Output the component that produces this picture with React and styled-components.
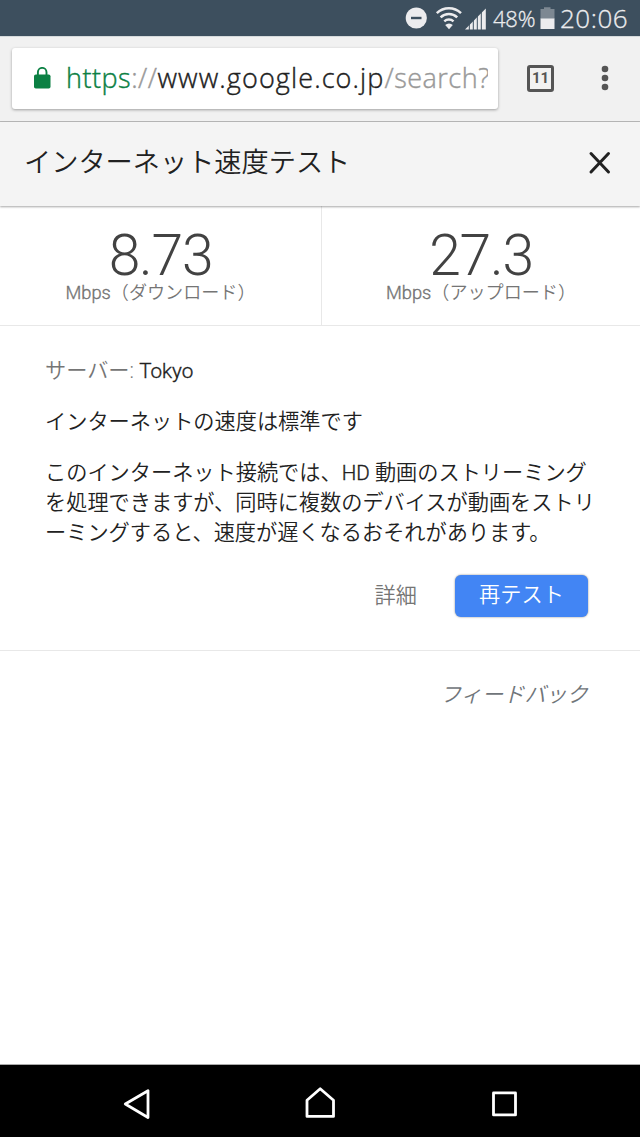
import React from 'react';
import styled, { createGlobalStyle } from 'styled-components';

const GlobalStyle = createGlobalStyle`
  * {
    box-sizing: border-box;
  }
  body {
    margin: 0;
    background: #fff;
    font-family: Roboto, 'Noto Sans CJK JP', sans-serif;
  }
`;

const Screen = styled.div`
  display: flex;
  flex-direction: column;
  width: 640px;
  height: 1137px;
  overflow: hidden;
  background: #fff;
`;

const StatusBar = styled.div`
  display: flex;
  align-items: center;
  height: 36px;
  padding-left: 405px;
  background: #3d4f5e;
  color: #ececee;
  font-family: 'Open Sans', 'Noto Sans', sans-serif;
  font-weight: 300;
  -webkit-text-stroke: 0.3px;
`;

const StatusText = styled.span`
  width: ${props => props.width}px;
  margin-left: ${props => props.left}px;
  font-size: ${props => props.size}px;
  letter-spacing: ${props => props.spacing}px;
  line-height: 36px;
  white-space: nowrap;
`;

const Toolbar = styled.div`
  display: flex;
  align-items: center;
  height: 86px;
  padding: 0 12px 2px;
  background: #f1f1f1;
  border-top: 1px solid #d5dadc;
  border-bottom: 1px solid #b9b9b9;
`;

const UrlBox = styled.div`
  display: flex;
  align-items: center;
  width: 486px;
  height: 61px;
  padding: 0 10px 0 21px;
  background: #fff;
  border-radius: 3px;
  box-shadow: 0 1px 3px rgba(0, 0, 0, 0.35);
`;

const Url = styled.div`
  flex: 1;
  margin-left: 15px;
  overflow: hidden;
  white-space: nowrap;
  font-family: 'Open Sans', 'Noto Sans', sans-serif;
  font-size: 27px;
  font-weight: 300;
  line-height: 40px;
  -webkit-text-stroke: 0.4px;
`;

const UrlPart = styled.span`
  color: ${props => props.color};
  letter-spacing: ${props => props.spacing || 0}px;
`;

const TabCount = styled.div`
  display: flex;
  align-items: center;
  justify-content: center;
  width: 27px;
  height: 27px;
  margin-left: 29px;
  border: 3px solid #555;
  border-radius: 3px;
  color: #555;
  font-size: 15px;
  font-weight: 700;
`;

const MenuIcon = styled.svg`
  margin-left: 47px;
`;

const PageHeader = styled.header`
  display: flex;
  align-items: center;
  justify-content: space-between;
  height: 84px;
  padding: 0 28px 3px 24px;
  background: #f4f4f4;
  box-shadow: 0 1px 2px rgba(0, 0, 0, 0.35);
  z-index: 1;
`;

const Title = styled.h1`
  margin: 0;
  padding-bottom: 5px;
  color: #212121;
  font-size: 27.2px;
  font-weight: 350;
`;

const Stats = styled.section`
  display: grid;
  grid-template-columns: 321px 319px;
  height: 120px;
  border-bottom: 1px solid #e8e8e8;
`;

const Stat = styled.div`
  display: flex;
  flex-direction: column;
  align-items: center;
  padding-top: 25px;
  & + & {
    border-left: 1px solid #e8e8e8;
  }
`;

const StatValue = styled.div`
  color: #424242;
  font-size: 57px;
  font-weight: 300;
  line-height: 50px;
  letter-spacing: -1.2px;
`;

const StatLabel = styled.div`
  color: #757575;
  font-size: 18.1px;
  font-weight: 350;
  line-height: 24px;
  white-space: nowrap;
`;

const Result = styled.section`
  height: 325px;
  padding: 30px 40px 0 45px;
  border-bottom: 1px solid #e8e8e8;
  color: #212121;
  font-size: 21.2px;
  font-weight: 350;
  line-height: 30px;
`;

const Paragraph = styled.p`
  margin: 0 0 21px;
  white-space: nowrap;
`;

const Muted = styled.span`
  color: #757575;
`;

// the light cut is too thin for latin words next to the kana
const Latin = styled.span`
  font-size: ${props => props.size || 20.6}px;
  font-weight: 300;
  -webkit-text-stroke: 0.35px;
`;

const Actions = styled.div`
  display: flex;
  justify-content: flex-end;
  align-items: center;
  gap: 38px;
  margin-top: 27px;
  padding-right: 12px;
`;

const DetailsLink = styled.a`
  color: #757575;
  padding-bottom: 1px;
`;

const RetryButton = styled.button`
  width: 133px;
  height: 42px;
  padding: 0 0 2px;
  border: 0;
  border-radius: 6px;
  background: #4285f4;
  box-shadow: 0 0 2px rgba(0, 0, 0, 0.5);
  color: #fff;
  font: inherit;
`;

const Feedback = styled.a`
  flex: 1;
  padding: 29px 52px 0 0;
  color: #70757a;
  font-size: 21.2px;
  font-style: italic;
  font-weight: 350;
  line-height: 30px;
  text-align: right;
`;

const NavBar = styled.nav`
  display: flex;
  align-items: center;
  height: 73px;
  background: #000;
  border-top: 1px solid #aaa;
`;

const StatusIcons = () => (
  <svg width="83" height="36" viewBox="405 0 83 36">
    <circle cx="416.3" cy="18" r="10.6" fill="#ececee" />
    <path d="M411 18h10.500" stroke="#3d4f5e" strokeWidth="2.400" />
    <g fill="none" stroke="#ececee" strokeWidth="2.500">
      <path d="M436.800 13.200a17.500 17.500 0 0 1 24.200 0" />
      <path d="M440.600 17.400a12 12 0 0 1 16.600 0" />
      <path d="M444.300 21.400a6.800 6.800 0 0 1 9.200 0" />
    </g>
    <path d="M449 29.200l-3.800-4.200a5.500 5.500 0 0 1 7.600 0z" fill="#ececee" />
    <path d="M465 29.500L485.800 8.500v21z" fill="#ececee" />
    <path
      d="M469.300 20v10M473.300 17v13M477.300 13v17M481.300 8v22"
      stroke="#3d4f5e"
      strokeWidth="1"
    />
  </svg>
);

const BatteryIcon = () => (
  <svg width="15" height="36" viewBox="540 0 15 36">
    <path d="M540.500 9h3.500V7.200h6.500V9h4v10h-14z" fill="#7d8892" />
    <path d="M540.500 18.500h14V29h-14z" fill="#ececee" />
  </svg>
);

const LockIcon = () => (
  <svg width="18" height="22" viewBox="0 0 18 22">
    <rect x="1" y="7.500" width="16.500" height="14" rx="1.800" fill="#0b8043" />
    <path
      d="M4.900 8.500V5.200a4.300 4.300 0 0 1 8.600 0v3.300"
      fill="none"
      stroke="#0b8043"
      strokeWidth="1.900"
    />
  </svg>
);

const CloseIcon = () => (
  <svg width="24" height="24" viewBox="0 0 24 24">
    <path
      d="M3 2.500L20.500 21M20.500 2.500L3 21"
      stroke="#212121"
      strokeWidth="3"
      strokeLinecap="round"
    />
  </svg>
);

const NavIcons = () => (
  <svg width="640" height="72" viewBox="0 1065 640 72">
    <g fill="none" stroke="#fff" strokeWidth="2.800" strokeLinejoin="round">
      <path d="M148 1090.700v26.800L125.300 1104z" />
      <path d="M307 1116.400v-16.200l13.200-11.400 13.300 11.400v16.200z" />
      <path d="M493.500 1092.900h22v22h-22z" />
    </g>
  </svg>
);

const stats = [
  { value: '8.73', label: '（ダウンロード）' },
  { value: '27.3', label: '（アップロード）' },
];

const App = () => (
  <>
    <GlobalStyle />
    <Screen lang="ja">
      <StatusBar>
        <StatusIcons />
        <StatusText size={22} spacing={-0.2} left={5} width={47}>
          48%
        </StatusText>
        <BatteryIcon />
        <StatusText size={26} spacing={0.5} left={5} width={70}>
          20:06
        </StatusText>
      </StatusBar>
      <Toolbar>
        <UrlBox>
          <LockIcon />
          <Url>
            <UrlPart color="#0b8043" spacing={0.5}>
              https
            </UrlPart>
            <UrlPart color="#999" spacing={0.5}>
              ://
            </UrlPart>
            <UrlPart color="#212121" spacing={1.1}>
              www.google.co.jp
            </UrlPart>
            <UrlPart color="#999" spacing={0.5}>
              /search?
            </UrlPart>
          </Url>
        </UrlBox>
        <TabCount>11</TabCount>
        <MenuIcon width="8" height="28" viewBox="0 0 8 28" fill="#555">
          <circle cx="4" cy="5" r="3.300" />
          <circle cx="4" cy="14" r="3.300" />
          <circle cx="4" cy="23" r="3.300" />
        </MenuIcon>
      </Toolbar>
      <PageHeader>
        <Title>インターネット速度テスト</Title>
        <CloseIcon />
      </PageHeader>
      <Stats>
        {stats.map(stat => (
          <Stat key={stat.value}>
            <StatValue>{stat.value}</StatValue>
            <StatLabel>
              <Latin size={18.3}>Mbps</Latin>
              {stat.label}
            </StatLabel>
          </Stat>
        ))}
      </Stats>
      <Result>
        <Paragraph>
          <Muted>サーバー:</Muted> <Latin>Tokyo</Latin>
        </Paragraph>
        <Paragraph>インターネットの速度は標準です</Paragraph>
        <Paragraph>
          このインターネット接続では、<Latin>HD</Latin> 動画のストリーミング
          <br />
          を処理できますが、同時に複数のデバイスが動画をストリ
          <br />
          ーミングすると、速度が遅くなるおそれがあります。
        </Paragraph>
        <Actions>
          <DetailsLink>詳細</DetailsLink>
          <RetryButton type="button">再テスト</RetryButton>
        </Actions>
      </Result>
      <Feedback>フィードバック</Feedback>
      <NavBar>
        <NavIcons />
      </NavBar>
    </Screen>
  </>
);

export default App;
